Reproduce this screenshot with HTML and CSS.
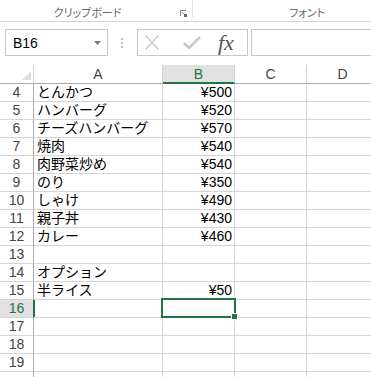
FILE: index.html
```html
<!DOCTYPE html>
<html lang="ja">
<head>
    <meta charset="UTF-8">
    <title>Book1 - Excel</title>
    <link rel="stylesheet" href="styles.css">
</head>
<body>
    <div class="ribbon">
        <div class="group group-clip">
            <span>クリップボード</span>
            <svg class="launcher" width="7" height="7" viewBox="0 0 7 7">
                <path d="M0.5 6V0.5H6" fill="none" stroke="#8a8a8a" stroke-width="1"/>
                <path d="M2 2L5 5" stroke="#8a8a8a" stroke-width="1"/>
                <rect x="4" y="4" width="3" height="3" fill="#666"/>
            </svg>
        </div>
        <div class="sep"></div>
        <div class="group group-font"><span>フォント</span></div>
    </div>

    <div class="formula-bar">
        <div class="namebox">
            <span class="cell-ref">B16</span>
            <svg width="7" height="4" viewBox="0 0 7 4"><path d="M0 0H7L3.5 4Z" fill="#7a7a7a"/></svg>
        </div>
        <div class="grip">
            <svg width="2" height="10" viewBox="0 0 2 10">
                <rect x="0" y="0" width="2" height="2" fill="#c0c0c0"/>
                <rect x="0" y="4" width="2" height="2" fill="#c0c0c0"/>
                <rect x="0" y="8" width="2" height="2" fill="#c0c0c0"/>
            </svg>
        </div>
        <div class="fx-buttons">
            <svg class="btn-cancel" width="14" height="15" viewBox="0 0 14 15">
                <path d="M0.5 0.5L13.5 14.5M13.5 0.5L0.5 14.5" stroke="#c8c8c8" stroke-width="1.4"/>
            </svg>
            <svg class="btn-enter" width="18" height="14" viewBox="0 0 18 14">
                <path d="M1 7L6 12L17 1" fill="none" stroke="#c8c8c8" stroke-width="2.6"/>
            </svg>
            <span class="fx">fx</span>
        </div>
        <div class="formula-input"></div>
    </div>

    <div class="sheet">
        <div class="corner">
            <svg width="9" height="9" viewBox="0 0 9 9"><path d="M9 0V9H0Z" fill="#dfdfdf"/></svg>
        </div>
        <div class="col-head">A</div>
        <div class="col-head active">B</div>
        <div class="col-head">C</div>
        <div class="col-head">D</div>

        <div class="row-head">4</div><div class="cell">とんかつ</div><div class="cell num">¥500</div><div class="cell"></div><div class="cell"></div>
        <div class="row-head">5</div><div class="cell">ハンバーグ</div><div class="cell num">¥520</div><div class="cell"></div><div class="cell"></div>
        <div class="row-head">6</div><div class="cell">チーズハンバーグ</div><div class="cell num">¥570</div><div class="cell"></div><div class="cell"></div>
        <div class="row-head">7</div><div class="cell">焼肉</div><div class="cell num">¥540</div><div class="cell"></div><div class="cell"></div>
        <div class="row-head">8</div><div class="cell">肉野菜炒め</div><div class="cell num">¥540</div><div class="cell"></div><div class="cell"></div>
        <div class="row-head">9</div><div class="cell">のり</div><div class="cell num">¥350</div><div class="cell"></div><div class="cell"></div>
        <div class="row-head">10</div><div class="cell">しゃけ</div><div class="cell num">¥490</div><div class="cell"></div><div class="cell"></div>
        <div class="row-head">11</div><div class="cell">親子丼</div><div class="cell num">¥430</div><div class="cell"></div><div class="cell"></div>
        <div class="row-head">12</div><div class="cell">カレー</div><div class="cell num">¥460</div><div class="cell"></div><div class="cell"></div>
        <div class="row-head">13</div><div class="cell"></div><div class="cell"></div><div class="cell"></div><div class="cell"></div>
        <div class="row-head">14</div><div class="cell">オプション</div><div class="cell"></div><div class="cell"></div><div class="cell"></div>
        <div class="row-head">15</div><div class="cell">半ライス</div><div class="cell num">¥50</div><div class="cell"></div><div class="cell"></div>
        <div class="row-head active">16</div><div class="cell"></div><div class="cell selected"><div class="selection"><div class="fill-handle"></div></div></div><div class="cell"></div><div class="cell"></div>
        <div class="row-head">17</div><div class="cell"></div><div class="cell"></div><div class="cell"></div><div class="cell"></div>
        <div class="row-head">18</div><div class="cell"></div><div class="cell"></div><div class="cell"></div><div class="cell"></div>
        <div class="row-head">19</div><div class="cell"></div><div class="cell"></div><div class="cell"></div><div class="cell"></div>
        <div class="row-head"></div><div class="cell"></div><div class="cell"></div><div class="cell"></div><div class="cell"></div>
    </div>
</body>
</html>
```

FILE: styles.css
```css
* {
    box-sizing: border-box;
}
body {
    margin: 0;
    background: #fff;
    font-family: "Liberation Sans", "Noto Sans CJK JP", sans-serif;
    overflow: hidden;
}

/* ribbon group captions */
.ribbon {
    display: flex;
    height: 22px;
    overflow: hidden;
    border-bottom: 1px solid #d5d5d5;
    color: #666;
    font-family: "Noto Sans CJK JP", sans-serif;
    font-size: 11px;
    line-height: 18px;
    font-feature-settings: "palt";
}
.group {
    display: flex;
    flex-shrink: 0;
    justify-content: center;
    padding-top: 3px;
}
.group-clip {
    position: relative;
    width: 192px;
    padding-right: 17px;
}
.launcher {
    position: absolute;
    right: 5px;
    top: 10px;
}
.sep {
    flex-shrink: 0;
    width: 1px;
    height: 17px;
    background: #e1e1e1;
}
.group-font {
    width: 228px;
}

/* name box + formula bar */
.formula-bar {
    display: flex;
    height: 27px;
    margin-top: 7px;
}
.namebox {
    display: flex;
    flex-shrink: 0;
    align-items: center;
    justify-content: space-between;
    width: 103px;
    margin-left: 5px;
    padding: 0 6px 0 7px;
    border: 1px solid #c6c6c6;
    font-size: 14px;
}
.grip {
    display: flex;
    flex-shrink: 0;
    align-items: center;
    width: 29px;
    padding-left: 13px;
}
.fx-buttons {
    display: flex;
    flex-shrink: 0;
    align-items: center;
    width: 111px;
    border: 1px solid #c6c6c6;
}
.btn-cancel {
    margin-left: 7px;
}
.btn-enter {
    margin-left: 24px;
    margin-top: 1px;
}
.fx {
    margin-left: 17px;
    font-family: "Liberation Serif", serif;
    font-style: italic;
    font-size: 22px;
    color: #555;
}
.formula-input {
    flex: 1;
    margin-left: 3px;
    border: 1px solid #c6c6c6;
    border-right: none;
}

/* grid */
.sheet {
    display: grid;
    grid-template-columns: 34px 129px 72px 72px 72px;
    grid-template-rows: 19px;
    grid-auto-rows: 18px;
    margin-top: 9px;
    overflow: hidden;
    font-size: 14px;
    line-height: 17px;
}
.corner {
    display: flex;
    justify-content: flex-end;
    align-items: flex-end;
    padding: 0 2px 3px 0;
    border-right: 1px solid #d4d4d4;
    border-bottom: 1px solid #ababab;
}
.col-head {
    text-align: center;
    color: #444;
    line-height: 18px;
    border-right: 1px solid #d4d4d4;
    border-bottom: 1px solid #ababab;
}
.col-head.active {
    background: #e1e1e1;
    color: #217346;
    border-bottom: 2px solid #217346;
}
.row-head {
    text-align: center;
    color: #444;
    border-right: 1px solid #ababab;
    border-bottom: 1px solid #d4d4d4;
}
.row-head.active {
    background: #e1e1e1;
    color: #217346;
    border-right-color: #217346;
    box-shadow: 1px 0 0 #217346;
}
.cell {
    padding: 0 2px 0 3px;
    white-space: nowrap;
    border-right: 1px solid #d4d4d4;
    border-bottom: 1px solid #d4d4d4;
}
.num {
    text-align: right;
}
.selected {
    position: relative;
}
.selection {
    position: absolute;
    left: -2px;
    top: -2px;
    right: -2px;
    bottom: -1px;
    border: 2px solid #217346;
}
.fill-handle {
    position: absolute;
    right: -4px;
    bottom: -4px;
    width: 7px;
    height: 7px;
    background: #217346;
    border: 1px solid #fff;
}
```
